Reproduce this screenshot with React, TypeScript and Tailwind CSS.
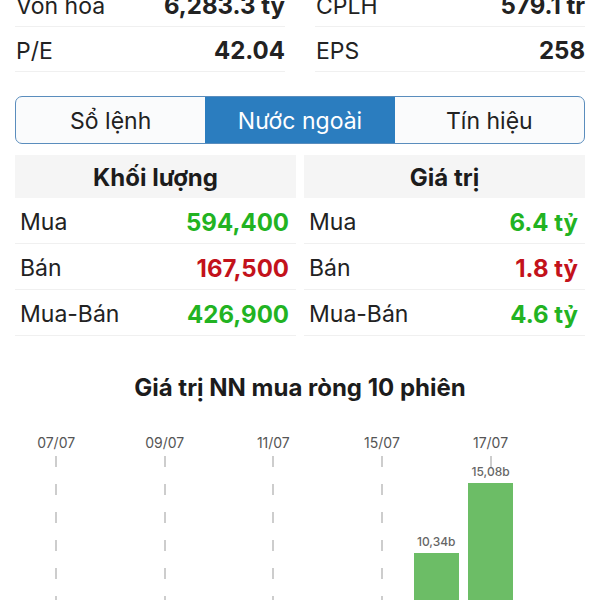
import React from "react";

const stats = [
    [
        { label: "Vốn hóa", value: "6,283.3 tỷ" },
        { label: "CPLH", value: "579.1 tr" },
    ],
    [
        { label: "P/E", value: "42.04" },
        { label: "EPS", value: "258" },
    ],
];

const tabs = ["Sổ lệnh", "Nước ngoài", "Tín hiệu"];

type Row = { label: string; value: string; up: boolean };

const volumeRows: Row[] = [
    { label: "Mua", value: "594,400", up: true },
    { label: "Bán", value: "167,500", up: false },
    { label: "Mua-Bán", value: "426,900", up: true },
];

const valueRows: Row[] = [
    { label: "Mua", value: "6.4 tỷ", up: true },
    { label: "Bán", value: "1.8 tỷ", up: false },
    { label: "Mua-Bán", value: "4.6 tỷ", up: true },
];

// 10 sessions, only every other date is labelled
const sessions = [
    { date: "07/07", show: true, value: 0 },
    { date: "08/07", show: false, value: 0 },
    { date: "09/07", show: true, value: 0 },
    { date: "10/07", show: false, value: 0 },
    { date: "11/07", show: true, value: 0 },
    { date: "14/07", show: false, value: 0 },
    { date: "15/07", show: true, value: 0 },
    { date: "16/07", show: false, value: 10.34 },
    { date: "17/07", show: true, value: 15.08 },
    { date: "18/07", show: false, value: 0 },
];

function StatCell({ label, value }: { label: string; value: string }) {
    return (
        <div className="flex h-[45px] items-center justify-between border-b border-[#f0f0f0] pl-[1px] pt-[4px]">
            <span className="text-[23px] text-[#222]">{label}</span>
            <span className="text-[24px] font-bold text-[#222]">{value}</span>
        </div>
    );
}

function FlowTable({ title, rows }: { title: string; rows: Row[] }) {
    return (
        <div className="flex flex-col">
            <div className="flex h-[43px] items-center justify-center bg-[#f5f5f5] pt-[2px]">
                <span className="text-[24px] font-bold text-[#1c1c1c]">{title}</span>
            </div>
            {rows.map((r) => (
                <div key={r.label} className="flex h-[46px] items-center justify-between border-b border-[#f0f0f0] pl-[5px] pr-[7px] pt-[4px]">
                    <span className="text-[23px] text-[#222]">{r.label}</span>
                    <span className={`text-[24px] font-bold ${r.up ? "text-[#22b322]" : "text-[#c3121b]"}`}>{r.value}</span>
                </div>
            ))}
        </div>
    );
}

export default function App() {
    const pxPerB = 223 / 15.08;

    return (
        <div className="h-[600px] w-[600px] overflow-hidden bg-white font-['Inter',sans-serif]">
            <div className="mt-[-18px] grid grid-cols-2 gap-[30px] px-[15px]">
                {[0, 1].map((col) => (
                    <div key={col} className="flex flex-col">
                        {stats.map((row, i) => (
                            <StatCell key={i} label={row[col].label} value={row[col].value} />
                        ))}
                    </div>
                ))}
            </div>

            <div className="mx-[15px] mt-[24px] grid h-[48px] grid-cols-3 overflow-hidden rounded-[7px] border-[1.5px] border-[#5a8dbd] bg-[#fafbfc]">
                {tabs.map((t, i) => (
                    <div
                        key={t}
                        className={`flex items-center justify-center pt-[2px] text-[23px] ${i === 1 ? "bg-[#2b7dbf] text-white" : "text-[#222]"}`}
                    >
                        {t}
                    </div>
                ))}
            </div>

            <div className="mx-[15px] mt-[11px] grid grid-cols-2 gap-[8px]">
                <FlowTable title="Khối lượng" rows={volumeRows} />
                <FlowTable title="Giá trị" rows={valueRows} />
            </div>

            <h2 className="mt-[37px] text-center text-[24px] font-bold leading-[30px] text-[#1c1c1c]">
                Giá trị NN mua ròng 10 phiên
            </h2>

            <div className="ml-[29px] mt-[27px] grid w-[543px] grid-cols-10">
                {sessions.map((s) => (
                    <div key={s.date} className="flex flex-col">
                        <div className="flex h-[24px] items-center justify-center text-[14px] text-[#555]">
                            {s.show ? s.date : ""}
                        </div>
                        <div className="relative flex h-[252px] flex-col items-center justify-end">
                            {s.show && (
                                <svg className="absolute left-1/2 top-0 -ml-[1px]" width="2" height="252">
                                    <line x1="1" y1="2" x2="1" y2="252" stroke="#bdbdbd" strokeWidth="1.5" strokeDasharray="11 17" />
                                </svg>
                            )}
                            {s.value > 0 && (
                                <>
                                    <span className="relative mb-[4px] text-[12px] font-medium leading-[14px] text-[#666]">
                                        {s.value.toFixed(2).replace(".", ",")}b
                                    </span>
                                    <div
                                        className="relative w-[45px] bg-[#6cbd66]"
                                        style={{ height: Math.round(s.value * pxPerB) }}
                                    />
                                </>
                            )}
                        </div>
                    </div>
                ))}
            </div>
        </div>
    );
}
